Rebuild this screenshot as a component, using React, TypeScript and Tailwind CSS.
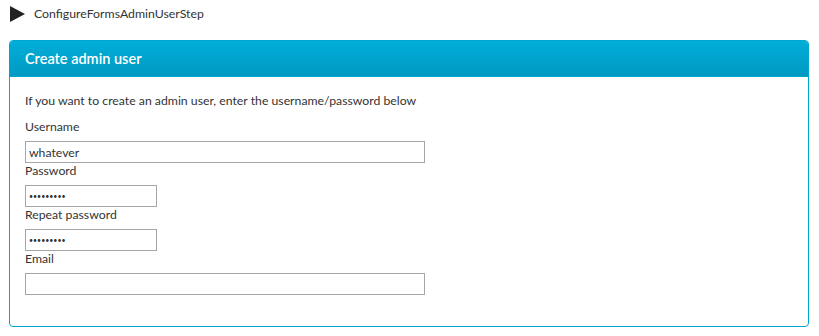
import React from "react";

function Field({
  label,
  value = "",
  wide = false,
  secret = false,
}: {
  label: string;
  value?: string;
  wide?: boolean;
  secret?: boolean;
}) {
  return (
    <div>
      <label className="block text-[12.25px] leading-[16px] text-[#333]">{label}</label>
      <input
        type="text"
        readOnly
        value={value}
        className={
          "mt-[6px] block h-[22px] border border-[#a6a6a6] bg-white px-[3px] text-[#333] outline-none " +
          (wide ? "w-[400px] " : "w-[132px] ") +
          (secret ? "text-[7px] tracking-[0px]" : "text-[12.25px]")
        }
      />
    </div>
  );
}

export default function App() {
  return (
    <div className="h-[336px] w-[819px] bg-white font-['Lato',sans-serif] text-[#333]">
      <div className="flex h-[28px] items-center pl-[10px]">
        <svg width="15" height="16" viewBox="0 0 15 16">
          <polygon points="0,0 15,8 0,16" fill="#222" />
        </svg>
        <span className="ml-[9px] text-[12.3px]">ConfigureFormsAdminUserStep</span>
      </div>
      <div className="ml-[9px] mr-[10px] mt-[12px] overflow-hidden rounded-[4px] border border-[#00a6d0]">
        <div className="flex h-[36px] items-center border-b border-[#00a6d0] bg-gradient-to-b from-[#00aed8] to-[#009ac2] px-[15px]">
          <span className="text-[14.5px] font-semibold text-white">Create admin user</span>
        </div>
        <div className="px-[15px] pb-[31px] pt-[16px]">
          <p className="mb-[10px] text-[12.25px] leading-[16px]">
            If you want to create an admin user, enter the username/password below
          </p>
          <Field label="Username" value="whatever" wide />
          <Field label="Password" value="•••••••••" secret />
          <Field label="Repeat password" value="•••••••••" secret />
          <Field label="Email" wide />
        </div>
      </div>
    </div>
  );
}
